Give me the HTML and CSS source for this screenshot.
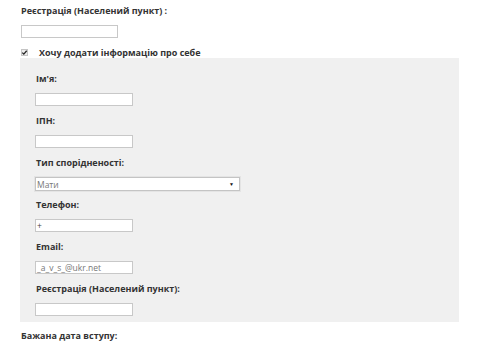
FILE: index.html
```html
<!DOCTYPE html>
<html lang="uk">
<head>
<meta charset="utf-8">
<title>Форма</title>
<link rel="stylesheet" href="styles.css">
</head>
<body>
<div class="page">
  <div class="field top">
    <div class="label">Реєстрація (Населений пункт) :</div>
    <div class="input"></div>
  </div>
  <div class="check-row">
    <span class="checkbox"><svg width="7" height="7" viewBox="0 0 7 7"><path d="M1.3 3.6 L2.8 5.1 L5.7 1.8" fill="none" stroke="#222" stroke-width="1.3"/></svg></span>
    <span class="check-label">Хочу додати інформацію про себе</span>
  </div>
  <div class="panel">
    <div class="group">
      <div class="label">Ім'я:</div>
      <div class="input"></div>
    </div>
    <div class="group">
      <div class="label">ІПН:</div>
      <div class="input"></div>
    </div>
    <div class="group">
      <div class="label">Тип спорідненості:</div>
      <div class="select"><span>Мати</span><span class="arrow">▼</span></div>
    </div>
    <div class="group">
      <div class="label">Телефон:</div>
      <div class="input dark">+</div>
    </div>
    <div class="group">
      <div class="label">Email:</div>
      <div class="input">_a_v_s_@ukr.net</div>
    </div>
    <div class="group last">
      <div class="label">Реєстрація (Населений пункт):</div>
      <div class="input"></div>
    </div>
  </div>
  <div class="label bottom">Бажана дата вступу:</div>
</div>
</body>
</html>
```
FILE: styles.css
```css
html, body {
  margin: 0;
  padding: 0;
  background: #fff;
}
body {
  font-family: "Open Sans", "Noto Sans", sans-serif;
  color: #333;
}
.page {
  padding: 4px 0 0 21px;
}
.label {
  font-size: 9px;
  font-weight: 700;
  line-height: 14px;
  color: #333;
}
.field.top .label {
  margin-bottom: 7px;
}
.input {
  box-sizing: border-box;
  width: 97px;
  height: 13px;
  border: 1px solid #c8c8c8;
  background: #fff;
  font-size: 8.5px;
  line-height: 11px;
  color: #777;
  padding-left: 1px;
  overflow: hidden;
  white-space: nowrap;
}
.input.dark {
  color: #444;
}
.check-row {
  display: flex;
  align-items: center;
  margin-top: 8px;
  height: 12px;
}
.checkbox {
  box-sizing: border-box;
  width: 7px;
  height: 7px;
  border: 1px solid #c4c4c4;
  background: #ececec;
  display: flex;
  align-items: center;
  justify-content: center;
  margin-right: 11px;
}
.checkbox svg {
  flex: none;
}
.check-label {
  font-size: 9px;
  font-weight: 700;
  color: #333;
}
.panel {
  margin: 0 0 0 -1px;
  width: 439px;
  background: #f0f0f0;
  padding: 14px 0 6px 15px;
  box-sizing: border-box;
}
.panel .label {
  padding-left: 1px;
  margin-bottom: 7px;
}
.group {
  margin-bottom: 8px;
}
.group.last {
  margin-bottom: 0;
}
.panel .input {
  width: 98px;
}
.select {
  box-sizing: border-box;
  width: 205px;
  height: 14px;
  margin-bottom: -1px;
  border: 1px solid #c4c4c4;
  box-shadow: 0 0 0 1px #e4e4e4;
  background: #fff;
  display: flex;
  align-items: center;
  justify-content: space-between;
  font-size: 8.5px;
  color: #777;
  padding: 0 5px 0 1px;
}
.arrow {
  font-size: 5px;
  color: #111;
}
.bottom {
  margin-top: 7px;
}
```
